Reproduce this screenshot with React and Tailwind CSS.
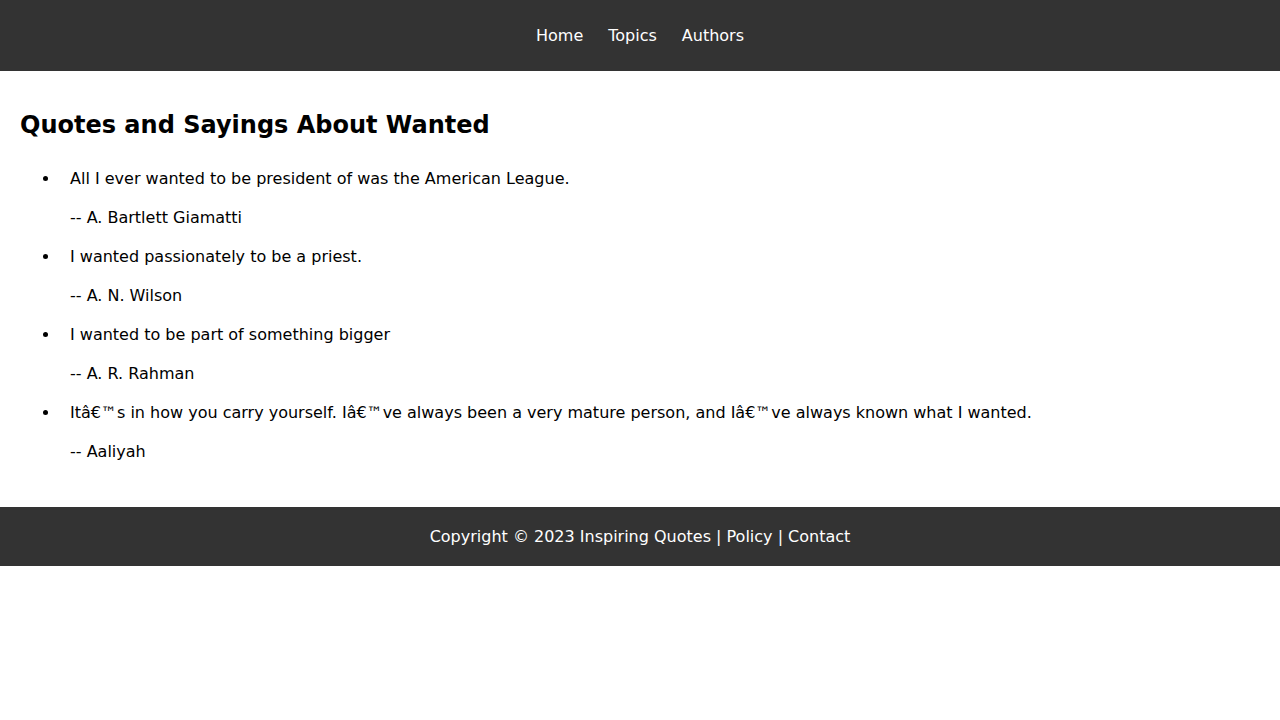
import React from "react";

const quotes = [
  ["All I ever wanted to be president of was the American League.", "A. Bartlett Giamatti"],
  ["I wanted passionately to be a priest.", "A. N. Wilson"],
  ["I wanted to be part of something bigger", "A. R. Rahman"],
  [
    "It\u00e2\u20ac\u2122s in how you carry yourself. I\u00e2\u20ac\u2122ve always been a very mature person, and I\u00e2\u20ac\u2122ve always known what I wanted.",
    "Aaliyah",
  ],
];

export default function App() {
  return (
    <div className="bg-white text-black" style={{ fontFamily: '"DejaVu Sans", sans-serif' }}>
      <header className="h-[71px] bg-[#333333] flex items-center justify-center gap-[25px] text-base leading-[19px] text-white">
        <a href="#">Home</a>
        <a href="#">Topics</a>
        <a href="#">Authors</a>
      </header>
      <main className="px-5 pt-[40px] pb-[46px]">
        <h2 className="text-2xl font-bold leading-[28px]">Quotes and Sayings About Wanted</h2>
        <ul className="list-disc pl-[40px] mt-[30px] flex flex-col gap-[20px] text-base leading-[19px]">
          {quotes.map(([q, a]) => (
            <li key={a} className="pl-[10px]">
              <p>{q}</p>
              <p className="mt-[20px]">-- {a}</p>
            </li>
          ))}
        </ul>
      </main>
      <footer className="h-[59px] bg-[#333333] flex items-center justify-center text-base leading-[19px] text-white">
        Copyright © 2023 Inspiring Quotes | Policy | Contact
      </footer>
    </div>
  );
}
